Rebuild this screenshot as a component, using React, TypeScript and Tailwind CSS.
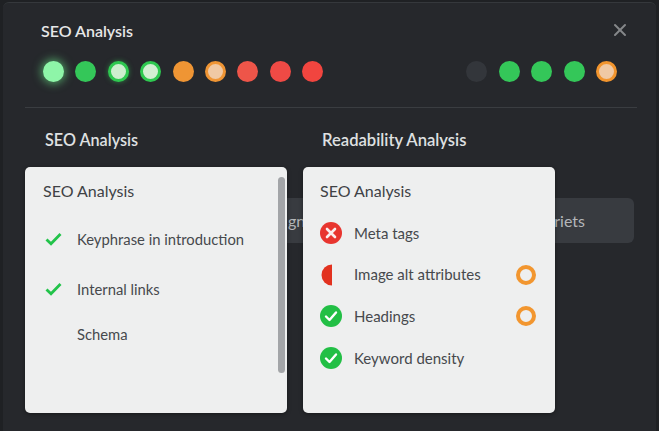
import React from 'react';
import { X } from 'lucide-react';

const topDots = [
  'bg-[#8ef5a8] shadow-[0_0_9px_2px_rgba(110,240,140,0.55)]',
  'bg-[#34c759]',
  'bg-[#cdeecf] border-[3px] border-[#2ec850] shadow-[0_0_5px_rgba(60,210,90,0.5)]',
  'bg-[#d2efd2] border-[3px] border-[#2ec850]',
  'bg-[#ef9534]',
  'bg-[#f0c9a4] border-[3px] border-[#ef9534]',
  'bg-[#ee5549]',
  'bg-[#ef4a45]',
  'bg-[#f1453f]',
];

const rightDots = [
  'bg-[#33363b]',
  'bg-[#34c759]',
  'bg-[#34c759]',
  'bg-[#34c759]',
  'bg-[#f0c9a4] border-[3px] border-[#f2952e]',
];

function Check() {
  return (
    <svg width="17" height="14" viewBox="0 0 17 14" fill="none" className="shrink-0">
      <path d="M1.500 7.500l4.500 4.300L15.500 2" stroke="#22c34a" strokeWidth="2.8" />
    </svg>
  );
}

function RoundCheck() {
  return (
    <svg width="22" height="22" viewBox="0 0 22 22" className="shrink-0">
      <circle cx="11" cy="11" r="11" fill="#22bf45" />
      <path d="M6 11.5l3.5 3.500L16 7.500" fill="none" stroke="#fff" strokeWidth="2.4" strokeLinecap="round" strokeLinejoin="round" />
    </svg>
  );
}

function RoundCross() {
  return (
    <svg width="22" height="22" viewBox="0 0 22 22" className="shrink-0">
      <circle cx="11" cy="11" r="11" fill="#e8352f" />
      <path d="M7 7l8 8M15 7l-8 8" fill="none" stroke="#fbeeee" strokeWidth="2.6" strokeLinecap="round" />
    </svg>
  );
}

function HalfCircle() {
  return (
    <svg width="22" height="22" viewBox="0 0 22 22" className="shrink-0">
      <path d="M12 .5A10.500 10.500 0 0 0 12 21.500Z" fill="#e2321f" />
    </svg>
  );
}

function Ring() {
  return <span className="w-5 h-5 rounded-full border-4 border-[#f2962f] shrink-0" />;
}

function Row({ icon, label, ring }: { icon: React.ReactNode; label: string; ring?: boolean }) {
  return (
    <div className="flex items-center h-[22px]">
      <span className="w-[29px] mr-[5px] flex">{icon}</span>
      <span className="flex-1 text-[15px] text-[#46494d]">{label}</span>
      {ring && <Ring />}
    </div>
  );
}

export default function App() {
  return (
    <div className="w-[659px] h-[431px] bg-[#1f2124] overflow-hidden pt-[2px] pl-[3px] font-['Lato',sans-serif]">
      <div className="relative w-[653px] h-[429px] bg-[#26282c] rounded-t-[6px] border-t border-[#35383c] px-[22px]">
        {/* header */}
        <div className="flex items-start justify-between pl-[16px] pr-[4px] pt-[18px]">
          <h2 className="text-[16px] leading-5 font-semibold text-[#e6e7e8]">SEO Analysis</h2>
          <X size={20} strokeWidth={2.4} className="text-[#85878a] -mt-[1px]" />
        </div>
        <div className="flex items-center justify-between pl-[18px] pr-[17px] mt-[14px] h-[32px]">
          <div className="flex gap-[11.4px]">
            {topDots.map((d, i) => (
              <span key={i} className={`w-[21px] h-[21px] rounded-full ${d}`} />
            ))}
          </div>
          <div className="flex gap-[11.4px]">
            {rightDots.map((d, i) => (
              <span key={i} className={`w-[21px] h-[21px] rounded-full ${d}`} />
            ))}
          </div>
        </div>
        <div className="h-px bg-[#3a3d41] mt-[20px] w-[612px]" />

        {/* section headings */}
        <div className="flex mt-[22px] pl-[20px]">
          <h3 className="w-[277px] text-[16.2px] leading-5 font-semibold text-[#dfe0e1]">SEO Analysis</h3>
          <h3 className="text-[16.6px] leading-5 font-semibold text-[#dfe0e1]">Readability Analysis</h3>
        </div>

        {/* bar behind the popovers */}
        <div className="absolute left-[197px] top-[195px] w-[434px] h-[45px] rounded-[6px] bg-[#383b40] flex items-center justify-between pl-[88px] pr-[49px] text-[16px] text-[#b4b6b9]">
          <span>gn</span>
          <span>riets</span>
        </div>

        {/* popovers */}
        <div className="relative flex gap-[16px] mt-[17px]">
          <div className="relative w-[262px] h-[246px] rounded-[5px] bg-[#eeefef] shadow-[0_1px_4px_rgba(0,0,0,0.4)] pl-[18px] pt-[14px]">
            <div className="text-[16px] leading-5 text-[#3f4246]">SEO Analysis</div>
            <div className="flex items-center h-[22px] mt-[27px]">
              <span className="w-[34px] flex pl-[2px]"><Check /></span>
              <span className="text-[14.8px] text-[#46494d]">Keyphrase in introduction</span>
            </div>
            <div className="flex items-center h-[22px] mt-[28px]">
              <span className="w-[34px] flex pl-[2px]"><Check /></span>
              <span className="text-[14.8px] text-[#46494d]">Internal links</span>
            </div>
            <div className="flex items-center h-[22px] mt-[23px]">
              <span className="w-[34px]" />
              <span className="text-[14.8px] text-[#46494d]">Schema</span>
            </div>
            <div className="absolute right-[2px] top-[10px] w-[7px] h-[196px] rounded-full bg-[#a3a5a8]" />
          </div>
          <div className="w-[252px] h-[246px] rounded-[5px] bg-[#eeefef] shadow-[0_1px_4px_rgba(0,0,0,0.4)] pl-[17px] pr-[19px] pt-[14px]">
            <div className="text-[16px] leading-5 text-[#3f4246]">SEO Analysis</div>
            <div className="flex flex-col gap-[19.7px] mt-[21px]">
              <Row icon={<RoundCross />} label="Meta tags" />
              <Row icon={<HalfCircle />} label="Image alt attributes" ring />
              <Row icon={<RoundCheck />} label="Headings" ring />
              <Row icon={<RoundCheck />} label="Keyword density" />
            </div>
          </div>
        </div>
      </div>
    </div>
  );
}
